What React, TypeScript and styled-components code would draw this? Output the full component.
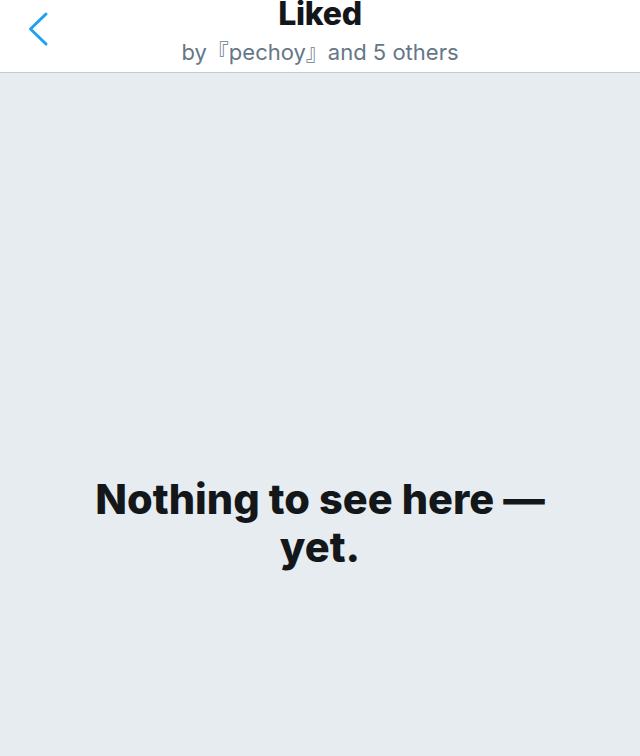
import React from "react";
import styled, { createGlobalStyle } from "styled-components";

const Global = createGlobalStyle`
  html, body { margin: 0; padding: 0; background: #e6ecf0; }
  body { font-family: Inter, "Noto Sans CJK JP", "Liberation Sans", sans-serif; -webkit-font-smoothing: antialiased; }
`;

const Page = styled.div`
  width: 640px;
  height: 756px;
  display: flex;
  flex-direction: column;
  overflow: hidden;
  background: #e6ecf0;
`;

const Header = styled.header`
  position: relative;
  height: 72px;
  flex: none;
  background: #ffffff;
  border-bottom: 1px solid #c3ccd3;
  display: flex;
  flex-direction: column;
  align-items: center;
`;

const BackButton = styled.button`
  position: absolute;
  left: 28px;
  top: 11px;
  width: 22px;
  height: 36px;
  padding: 0;
  border: 0;
  background: none;
  display: flex;
  align-items: center;
  justify-content: flex-start;
`;

const Title = styled.h1`
  margin: 0;
  font-size: 32px;
  line-height: 28px;
  font-weight: 800;
  color: #14171a;
  letter-spacing: -0.3px;
`;

const Subtitle = styled.div`
  margin-top: 11px;
  font-size: 22px;
  line-height: 26px;
  font-weight: 400;
  color: #657786;
`;

const Body = styled.main`
  flex: 1;
  display: flex;
  justify-content: center;
  padding-top: 402px;
`;

const Empty = styled.p`
  margin: 0;
  width: 500px;
  text-align: center;
  font-size: 41.5px;
  line-height: 48px;
  font-weight: 800;
  color: #14171a;
  letter-spacing: 0;
`;

export default function App() {
  return (
    <Page>
      <Global />
      <Header>
        <BackButton aria-label="Back">
          <svg width="22" height="36" viewBox="0 0 22 36" fill="none">
            <path d="M18 3 L2.5 18 L18 33" stroke="#1da1f2" strokeWidth="3" strokeLinecap="round" strokeLinejoin="round" />
          </svg>
        </BackButton>
        <Title>Liked</Title>
        <Subtitle>by『pechoy』and 5 others</Subtitle>
      </Header>
      <Body>
        <Empty>Nothing to see here — yet.</Empty>
      </Body>
    </Page>
  );
}
